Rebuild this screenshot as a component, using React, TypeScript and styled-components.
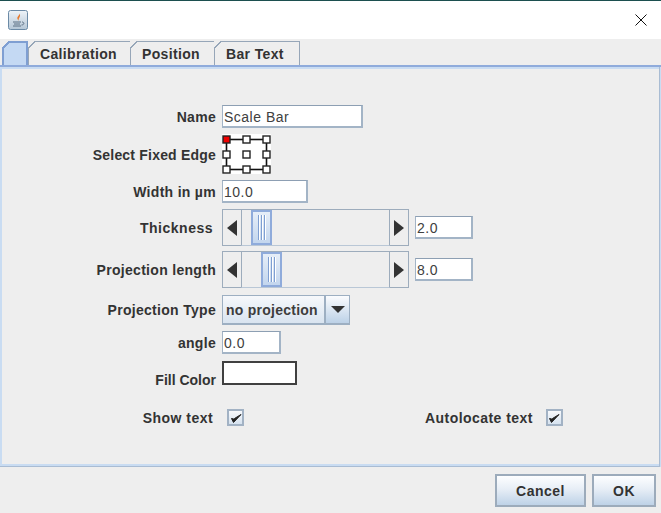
import styled, { createGlobalStyle } from 'styled-components'

const GlobalStyle = createGlobalStyle`
    html, body {
        margin: 0;
        padding: 0;
        background: #eeeeee;
    }
`

const Dialog = styled.div`
    width: 661px;
    height: 513px;
    display: flex;
    flex-direction: column;
    overflow: hidden;
    background: #eeeeee;
    color: #333333;
    font-family: "Liberation Sans", Arial, sans-serif;
    font-size: 14px;
`
const TitleBar = styled.div`
    height: 38px;
    flex: none;
    display: flex;
    align-items: center;
    justify-content: space-between;
    padding: 0 14px 0 8px;
    background: #ffffff;
    border-top: 1px solid #1c4f4f;
`
const TabStrip = styled.div`
    height: 25px;
    flex: none;
    margin-top: 2px;
    padding-left: 2px;
    display: flex;
    align-items: flex-end;
`
const Tab = styled.div<{ $w: number }>`
    position: relative;
    box-sizing: border-box;
    width: ${({ $w }) => $w}px;
    height: 25px;
    margin-left: -1px;
    padding: 4px 0 0 11px;
    background: #eeeeee;
    border: 1px solid #96a6b8;
    border-bottom: 0;
    font-weight: bold;
    line-height: 17px;
    letter-spacing: 0.35px;
    &::before {
        content: '';
        position: absolute;
        top: -1px;
        left: -1px;
        width: 7px;
        height: 7px;
        background: linear-gradient(135deg, #eeeeee 46%, #96a6b8 46%, #96a6b8 58%, #eeeeee 58%);
    }
`
const ActiveTab = styled.div`
    position: relative;
    box-sizing: border-box;
    width: 26px;
    height: 25px;
    margin-right: 1px;
    background: #c4d9f3;
    border: 2px solid #7f9fd2;
    border-bottom: 0;
    &::before {
        content: '';
        position: absolute;
        top: -2px;
        left: -2px;
        width: 7px;
        height: 7px;
        background: linear-gradient(135deg, #eeeeee 46%, #7f9fd2 46%, #7f9fd2 66%, #c4d9f3 66%);
    }
`
const Panel = styled.div`
    position: relative;
    box-sizing: border-box;
    height: 401px;
    flex: none;
    padding-top: 36px;
    background: #eeeeee;
    border-style: solid;
    border-color: #c9dcf2;
    border-width: 3px 2px 3px 2px;
    &::before {
        content: '';
        position: absolute;
        top: -4px;
        left: -2px;
        right: -2px;
        height: 2px;
        background: #8fabdb;
    }
    &::after {
        content: '';
        position: absolute;
        left: -2px;
        right: -1px;
        bottom: -3px;
        height: 1px;
        background: #a9bcd3;
    }
`
const RightEdge = styled.div`
    position: absolute;
    top: -2px;
    bottom: -3px;
    right: -1px;
    width: 1px;
    background: #a9bcd3;
`
const Form = styled.div`
    display: flex;
    flex-direction: column;
    gap: 6px;
`
const Row = styled.div<{ $h: number; $mt?: number }>`
    height: ${({ $h }) => $h}px;
    margin-top: ${({ $mt }) => $mt ?? 0}px;
    display: flex;
    align-items: center;
`
const Label = styled.div<{ $pr?: number; $drop?: number; $ls?: number }>`
    box-sizing: border-box;
    width: 214px;
    flex: none;
    margin-right: 6px;
    margin-top: ${({ $drop }) => $drop ?? 0}px;
    padding-right: ${({ $pr }) => $pr ?? 0}px;
    text-align: right;
    font-weight: bold;
    line-height: 16px;
    letter-spacing: ${({ $ls }) => $ls ?? 0.3}px;
    white-space: nowrap;
`
const SideLabel = styled.span`
    margin-left: 181px;
    margin-right: 13px;
    font-weight: bold;
    line-height: 16px;
    letter-spacing: 0.45px;
    white-space: nowrap;
`
const Field = styled.div<{ $w: number; $ml?: number }>`
    box-sizing: border-box;
    width: ${({ $w }) => $w}px;
    height: 23px;
    flex: none;
    margin-left: ${({ $ml }) => $ml ?? 0}px;
    padding-left: 1px;
    background: #ffffff;
    border: 1px solid #a3b4c6;
    border-top-color: #8d9fb3;
    border-right-width: 2px;
    border-bottom-width: 2px;
    color: #404040;
    line-height: 23px;
    letter-spacing: 0.5px;
`
const Slider = styled.div`
    box-sizing: border-box;
    width: 187px;
    height: 37px;
    flex: none;
    display: flex;
    background: #eeeeee;
    border: 1px solid #9dacbc;
`
const ArrowButton = styled.div`
    width: 18px;
    flex: none;
    display: flex;
    align-items: center;
    justify-content: center;
`
const Track = styled.div`
    box-sizing: border-box;
    flex: 1;
    margin: 0 0 -1px;
    background: #eeeeee;
    border: 1px solid #9dacbc;
    border-top-width: 0;
    border-bottom-color: #b9c7d6;
`
const Thumb = styled.div<{ $left: number }>`
    box-sizing: border-box;
    width: 21px;
    height: 100%;
    margin-left: ${({ $left }) => $left}px;
    display: flex;
    align-items: center;
    justify-content: center;
    gap: 2px;
    background: linear-gradient(#e6eef8, #c3d6ee);
    border: 2px solid #8fabdb;
    span {
        width: 1px;
        height: 25px;
        background: #7f9fd2;
        box-shadow: 1px 0 0 #ffffff;
    }
`
const Combo = styled.div`
    box-sizing: border-box;
    width: 128px;
    height: 30px;
    flex: none;
    display: flex;
    background: #dfe8f2;
    border: 1px solid #9dafc2;
    border-bottom-width: 2px;
`
const ComboText = styled.div`
    flex: 1;
    padding-left: 3px;
    font-weight: bold;
    line-height: 29px;
    letter-spacing: 0.25px;
    color: #3d3d3d;
    background: linear-gradient(#f6f8fb, #d9e4f0);
`
const ComboButton = styled.div`
    box-sizing: border-box;
    width: 25px;
    flex: none;
    display: flex;
    align-items: center;
    justify-content: center;
    background: linear-gradient(#fbfcfe, #bcd1e7);
    border-left: 2px solid #9dafc2;
`
const ColorSwatch = styled.div`
    box-sizing: border-box;
    width: 75px;
    height: 24px;
    flex: none;
    background: #ffffff;
    border: 2px solid #404040;
`
const CheckBox = styled.div<{ $ml?: number }>`
    box-sizing: border-box;
    width: 17px;
    height: 17px;
    flex: none;
    margin-left: ${({ $ml }) => $ml ?? 0}px;
    display: flex;
    align-items: center;
    justify-content: center;
    background: linear-gradient(#f7f9fc, #d6e2ef);
    border: 2px solid #a2b2c4;
`
const ButtonBar = styled.div`
    flex: 1;
    display: flex;
    justify-content: flex-end;
    gap: 6px;
    padding: 7px 5px 0 0;
`
const DialogButton = styled.div<{ $w: number }>`
    box-sizing: border-box;
    width: ${({ $w }) => $w}px;
    height: 33px;
    text-align: center;
    font-weight: bold;
    line-height: 31px;
    letter-spacing: 0.5px;
    background: linear-gradient(#fdfeff, #e7eef6 45%, #bed2e7);
    border: 2px solid #9cabbb;
`

const JavaIcon = () => (
    <svg width="20" height="20" viewBox="0 0 20 20">
        <defs>
            <linearGradient id="javaBg" x1="0" y1="0" x2="0" y2="1">
                <stop offset="0" stopColor="#eef3f8" />
                <stop offset="1" stopColor="#b4c6d6" />
            </linearGradient>
        </defs>
        <rect x="0.5" y="0.5" width="19" height="19" rx="2" fill="url(#javaBg)" stroke="#6b8aa6" />
        <path d="M11.5 3 C12.5 5 8.5 6.5 9.5 9 C10 10.5 11 10.5 11 10.5 C9.5 8.5 13.5 7 11.5 3 Z" fill="#e8792b" />
        <path d="M5 12 H13 M6 14 H12 M5 16 H13" stroke="#5a6f82" strokeWidth="1" fill="none" />
        <path d="M14 12 C16.5 12 16.5 15 13.5 15" stroke="#5a6f82" strokeWidth="1" fill="none" />
    </svg>
)

const CloseIcon = () => (
    <svg width="12" height="12" viewBox="0 0 12 12">
        <path d="M0.5 0.5 L11.5 11.5 M11.5 0.5 L0.5 11.5" stroke="#111111" strokeWidth="1" fill="none" />
    </svg>
)

const LeftArrow = () => (
    <svg width="10" height="16" viewBox="0 0 10 16"><polygon points="10,0 10,16 0,8" fill="#333333" /></svg>
)

const RightArrow = () => (
    <svg width="10" height="16" viewBox="0 0 10 16"><polygon points="0,0 0,16 10,8" fill="#333333" /></svg>
)

const DownArrow = () => (
    <svg width="14" height="7" viewBox="0 0 14 7"><polygon points="0,0 14,0 7,7" fill="#333333" /></svg>
)

const CheckMark = () => (
    <svg width="12" height="12" viewBox="0 0 12 12">
        <path d="M1.5 6.5 L3.5 10.5 L11 2.5 L4.5 6.5 L3.8 7 Z" fill="#222222" stroke="#222222" strokeWidth="1" />
    </svg>
)

const EdgePicker = () => {
    const xs = [4.5, 24.5, 44.5]
    const ys = [5.5, 20.5, 35.5]
    return (
        <svg width="49" height="40" viewBox="0 0 49 40">
            <rect width="49" height="40" fill="#ffffff" />
            <rect x="4.5" y="5.5" width="40" height="30" fill="none" stroke="#111111" strokeWidth="1.6" />
            {ys.map((y, row) => xs.map((x, col) => (
                <rect
                    key={`${row}-${col}`}
                    x={x - 3.5}
                    y={y - 3.5}
                    width="7"
                    height="7"
                    fill={row === 0 && col === 0 ? '#ee0000' : '#ffffff'}
                    stroke="#222222"
                    strokeWidth="1.4"
                />
            )))}
        </svg>
    )
}

const ScrollSlider = ({ left }: { left: number }) => (
    <Slider>
        <ArrowButton><LeftArrow /></ArrowButton>
        <Track>
            <Thumb $left={left}><span /><span /><span /></Thumb>
        </Track>
        <ArrowButton><RightArrow /></ArrowButton>
    </Slider>
)

const App = () => {
    return (
        <Dialog>
            <GlobalStyle />
            <TitleBar>
                <JavaIcon />
                <CloseIcon />
            </TitleBar>
            <TabStrip>
                <ActiveTab />
                <Tab $w={103}>Calibration</Tab>
                <Tab $w={85}>Position</Tab>
                <Tab $w={86}>Bar Text</Tab>
            </TabStrip>
            <Panel>
                <RightEdge />
                <Form>
                    <Row $h={23}>
                        <Label>Name</Label>
                        <Field $w={141}>Scale Bar</Field>
                    </Row>
                    <Row $h={40}>
                        <Label $ls={0.2} $drop={2}>Select Fixed Edge</Label>
                        <EdgePicker />
                    </Row>
                    <Row $h={23}>
                        <Label>Width in µm</Label>
                        <Field $w={86}>10.0</Field>
                    </Row>
                    <Row $h={37}>
                        <Label $pr={3} $ls={0.5}>Thickness</Label>
                        <ScrollSlider left={9} />
                        <Field $w={58} $ml={6}>2.0</Field>
                    </Row>
                    <Row $h={37} $mt={-1}>
                        <Label>Projection length</Label>
                        <ScrollSlider left={19} />
                        <Field $w={58} $ml={6}>8.0</Field>
                    </Row>
                    <Row $h={30} $mt={1}>
                        <Label>Projection Type</Label>
                        <Combo>
                            <ComboText>no projection</ComboText>
                            <ComboButton><DownArrow /></ComboButton>
                        </Combo>
                    </Row>
                    <Row $h={23}>
                        <Label>angle</Label>
                        <Field $w={59}>0.0</Field>
                    </Row>
                    <Row $h={24} $mt={1}>
                        <Label $drop={14} $ls={0}>Fill Color</Label>
                        <ColorSwatch />
                    </Row>
                    <Row $h={17} $mt={18}>
                        <Label $pr={3} $ls={0.45}>Show text</Label>
                        <CheckBox $ml={5}><CheckMark /></CheckBox>
                        <SideLabel>Autolocate text</SideLabel>
                        <CheckBox><CheckMark /></CheckBox>
                    </Row>
                </Form>
            </Panel>
            <ButtonBar>
                <DialogButton $w={91}>Cancel</DialogButton>
                <DialogButton $w={64}>OK</DialogButton>
            </ButtonBar>
        </Dialog>
    )
}

export default App
